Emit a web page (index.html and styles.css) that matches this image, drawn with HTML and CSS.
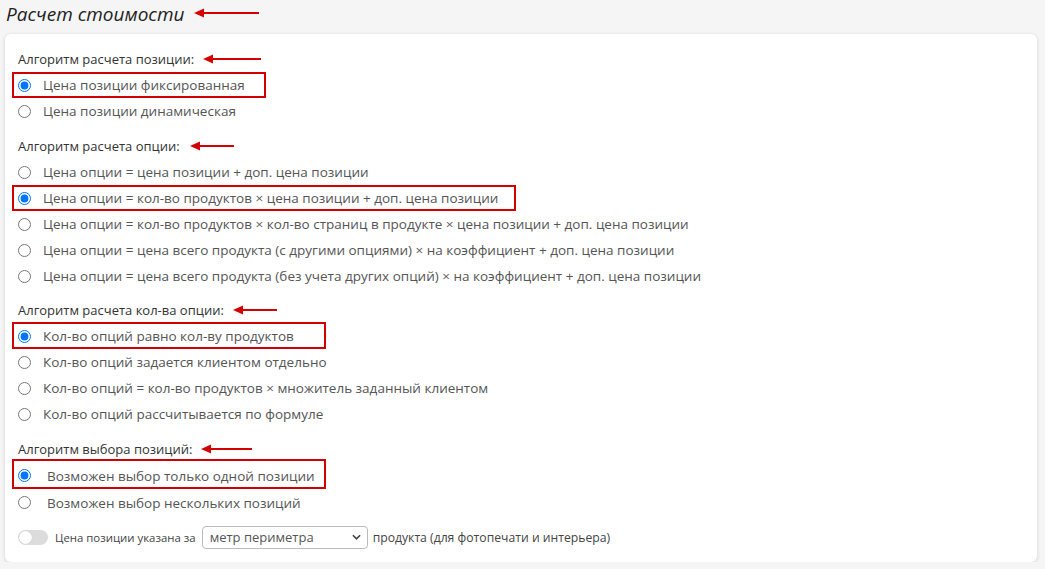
FILE: index.html
```html
<!DOCTYPE html>
<html lang="ru">
<head>
<meta charset="utf-8">
<title>Расчет стоимости</title>
<link rel="stylesheet" href="styles.css">
</head>
<body>
<h1 class="title">Расчет стоимости<svg class="arrow a-title" viewBox="0 0 65 10"><polygon points="0,5 10,0.5 10,9.5"/><rect x="9" y="4" width="56" height="2"/></svg></h1>
<div class="card">
  <div class="section">
    <div class="label">Алгоритм расчета позиции:<svg class="arrow a1" viewBox="0 0 58 10"><polygon points="0,5 10,0.5 10,9.5"/><rect x="9" y="4" width="49" height="2"/></svg></div>
    <label class="opt boxed b1"><input type="radio" name="g1" checked><span>Цена позиции фиксированная</span></label>
    <label class="opt"><input type="radio" name="g1"><span>Цена позиции динамическая</span></label>
  </div>
  <div class="section">
    <div class="label">Алгоритм расчета опции:<svg class="arrow a2" viewBox="0 0 44 10"><polygon points="0,5 10,0.5 10,9.5"/><rect x="9" y="4" width="35" height="2"/></svg></div>
    <label class="opt"><input type="radio" name="g2"><span>Цена опции = цена позиции + доп. цена позиции</span></label>
    <label class="opt boxed b2"><input type="radio" name="g2" checked><span>Цена опции = кол-во продуктов × цена позиции + доп. цена позиции</span></label>
    <label class="opt"><input type="radio" name="g2"><span>Цена опции = кол-во продуктов × кол-во страниц в продукте × цена позиции + доп. цена позиции</span></label>
    <label class="opt"><input type="radio" name="g2"><span>Цена опции = цена всего продукта (с другими опциями) × на коэффициент + доп. цена позиции</span></label>
    <label class="opt"><input type="radio" name="g2"><span>Цена опции = цена всего продукта (без учета других опций) × на коэффициент + доп. цена позиции</span></label>
  </div>
  <div class="section">
    <div class="label">Алгоритм расчета кол-ва опции:<svg class="arrow a3" viewBox="0 0 44 10"><polygon points="0,5 10,0.5 10,9.5"/><rect x="9" y="4" width="35" height="2"/></svg></div>
    <label class="opt boxed b3"><input type="radio" name="g3" checked><span>Кол-во опций равно кол-ву продуктов</span></label>
    <label class="opt"><input type="radio" name="g3"><span>Кол-во опций задается клиентом отдельно</span></label>
    <label class="opt"><input type="radio" name="g3"><span>Кол-во опций = кол-во продуктов × множитель заданный клиентом</span></label>
    <label class="opt"><input type="radio" name="g3"><span>Кол-во опций рассчитывается по формуле</span></label>
  </div>
  <div class="section last">
    <div class="label">Алгоритм выбора позиций:<svg class="arrow a4" viewBox="0 0 51 10"><polygon points="0,5 10,0.5 10,9.5"/><rect x="9" y="4" width="42" height="2"/></svg></div>
    <label class="opt wide boxed b4"><input type="radio" name="g4" checked><span>Возможен выбор только одной позиции</span></label>
    <label class="opt wide"><input type="radio" name="g4"><span>Возможен выбор нескольких позиций</span></label>
  </div>
  <div class="unit-row">
    <span class="toggle"><span class="knob"></span></span>
    <span class="small lead">Цена позиции указана за</span>
    <div class="select"><span>метр периметра</span><svg viewBox="0 0 10 6" class="chev"><polyline points="1,1 5,5 9,1"/></svg></div>
    <span class="small">продукта (для фотопечати и интерьера)</span>
  </div>
</div>
</body>
</html>
```
FILE: styles.css
```css
html, body {
  margin: 0;
  padding: 0;
}
body {
  background: #f5f5f5;
  font-family: "Open Sans", "Noto Sans", sans-serif;
  color: #333;
  padding: 0 8px 0 5px;
}
.title {
  margin: 0;
  height: 28px;
  display: flex;
  align-items: center;
  font-size: 19px;
  font-style: italic;
  font-weight: 400;
  color: #222;
  padding-left: 1px;
  line-height: 28px;
}
.arrow {
  fill: #d40000;
  height: 10px;
  flex: none;
}
.a-title { width: 65px; margin-left: 10px; margin-top: -2px; }
.a1 { width: 58px; margin-left: 9px; }
.a2 { width: 44px; margin-left: 10px; }
.a3 { width: 44px; margin-left: 9px; }
.a4 { width: 51px; margin-left: 9px; }

.card {
  margin-top: 6px;
  background: #fff;
  border-radius: 6px;
  box-shadow: 0 1px 4px rgba(0,0,0,0.14);
  padding: 15px 12px 12px 13px;
  height: 528px;
  box-sizing: border-box;
}
.section {
  margin-bottom: 12px;
}
.label {
  display: flex;
  align-items: center;
  height: 20px;
  font-size: 13px;
  color: #333;
  margin-bottom: 3px;
}
.opt {
  position: relative;
  display: flex;
  align-items: center;
  height: 26px;
  font-size: 13.5px;
  color: #555;
}
.opt input {
  margin: 0 12px 0 0;
  width: 13px;
  height: 13px;
  flex: none;
}
.opt.wide {
  height: 27px;
}
.opt.wide input {
  margin-right: 16px;
}
.boxed::before {
  content: "";
  position: absolute;
  left: -6px;
  top: 0;
  bottom: 0;
  width: var(--bw);
  border: 2px solid #d00000;
  box-sizing: border-box;
  pointer-events: none;
}
.b1 { --bw: 254px; }
.b2 { --bw: 504px; }
.b3 { --bw: 314px; }
.b3::before { top: -1px; bottom: 0; }
.b4 { --bw: 314px; }
.b4::before { top: -3px; bottom: 0; }
.section:nth-child(3) {
  margin-top: -1px;
}
.section.last {
  margin-top: 1px;
  margin-bottom: 8px;
}
.unit-row {
  display: flex;
  align-items: center;
  height: 26px;
}
.toggle {
  width: 30px;
  height: 15px;
  border-radius: 8px;
  background: #dcdcdc;
  position: relative;
  margin-right: 7px;
  flex: none;
}
.knob {
  position: absolute;
  left: 1px;
  top: 1px;
  width: 13px;
  height: 13px;
  border-radius: 50%;
  background: #fff;
  box-shadow: 0 0 1px rgba(0,0,0,0.2);
}
.small {
  font-size: 12.2px;
  color: #444;
}
.small.lead {
  font-size: 11.4px;
}
.select {
  display: flex;
  align-items: center;
  justify-content: space-between;
  width: 166px;
  height: 23px;
  box-sizing: border-box;
  border: 1px solid #bbb;
  border-radius: 4px;
  padding: 0 6px 0 7px;
  margin: 0 5px 0 6px;
  font-size: 13px;
  color: #555;
}
.chev {
  width: 9px;
  height: 6px;
  fill: none;
  stroke: #444;
  stroke-width: 1.8;
}
```
